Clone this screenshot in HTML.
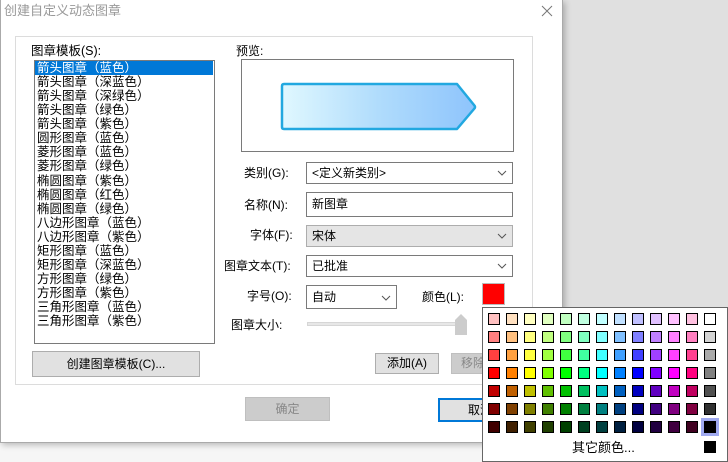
<!DOCTYPE html>
<html><head><meta charset="utf-8"><style>
*{margin:0;padding:0;box-sizing:border-box}
body{width:728px;height:462px;position:relative;overflow:hidden;background:#f6f6f6;font-family:"Liberation Sans","Noto Sans CJK SC",sans-serif;font-size:12px;color:#000}
.a{position:absolute}
.lbl{position:absolute;font-size:12px;line-height:14px;white-space:nowrap}
.box{position:absolute;border:1px solid #7a7a7a;background:#fff}
.cb{position:absolute;border:1px solid #7a7a7a;background:#fff;font-size:12px;line-height:20px;padding-left:5px}
.cb svg{position:absolute;right:5px;top:7px}
.btn{position:absolute;border:1px solid #adadad;background:#e1e1e1;text-align:center;font-size:12px}
.sw{position:absolute;width:12px;height:12px;border:1px solid #000}
</style></head><body>
<div class="a" style="left:562px;top:0;width:166px;height:443px;background:#e0e0e0"></div>
<div class="a" style="left:0;top:0;width:563px;height:443px;background:#fff;border:1px solid #aaa;border-top:none;box-shadow:2px 2px 6px rgba(0,0,0,.25)"></div>
<div class="lbl" style="left:4px;top:3px;font-size:13px;line-height:16px;color:#999">创建自定义动态图章</div>
<svg class="a" style="left:541px;top:5px" width="12" height="12"><path d="M1 1L11 11M11 1L1 11" stroke="#777" stroke-width="1"/></svg>
<div class="a" style="left:15px;top:36px;width:518px;height:349px;border:1px solid #dcdcdc"></div>
<div class="lbl" style="left:31px;top:44px;font-size:12.5px">图章模板(S):</div>
<div class="box" style="left:34px;top:60px;width:181px;height:284px"></div>
<div class="a" style="left:35px;top:61px;width:178px;height:14px;background:#0078d7"></div>
<div class="a" style="left:37px;top:61px;line-height:14.06px;font-size:12.5px;white-space:nowrap">
<div style="color:#fff">箭头图章（蓝色）</div><div>箭头图章（深蓝色）</div><div>箭头图章（深绿色）</div><div>箭头图章（绿色）</div><div>箭头图章（紫色）</div><div>圆形图章（蓝色）</div><div>菱形图章（蓝色）</div><div>菱形图章（绿色）</div><div>椭圆图章（紫色）</div><div>椭圆图章（红色）</div><div>椭圆图章（绿色）</div><div>八边形图章（蓝色）</div><div>八边形图章（紫色）</div><div>矩形图章（蓝色）</div><div>矩形图章（深蓝色）</div><div>方形图章（绿色）</div><div>方形图章（紫色）</div><div>三角形图章（蓝色）</div><div>三角形图章（紫色）</div></div>
<div class="btn" style="left:32px;top:351px;width:168px;height:26px;line-height:24px">创建图章模板(C)...</div>
<div class="lbl" style="left:236px;top:44px">预览:</div>
<div class="box" style="left:241px;top:59px;width:273px;height:93px"></div>
<svg class="a" style="left:279px;top:81px" width="200" height="52"><defs><linearGradient id="g" x1="0" x2="1"><stop offset="0" stop-color="#e0f8ff"/><stop offset=".5" stop-color="#b0dcfc"/><stop offset="1" stop-color="#8ec4fc"/></linearGradient></defs><path d="M5 3H178L195 24Q197 26 195 28L178 48H5Q3 48 3 46V5Q3 3 5 3Z" fill="url(#g)" stroke="#22a8e0" stroke-width="2.5" stroke-linejoin="round"/></svg>
<div class="lbl" style="left:244px;top:166px">类别(G):</div>
<div class="cb" style="left:306px;top:162px;width:207px;height:22px">&lt;定义新类别&gt;<svg width="10" height="6"><path d="M1 1L5 5L9 1" stroke="#555" fill="none"/></svg></div>
<div class="lbl" style="left:244px;top:198px">名称(N):</div>
<div class="cb" style="left:306px;top:192px;width:207px;height:25px;line-height:23px">新图章</div>
<div class="lbl" style="left:250px;top:228px">字体(F):</div>
<div class="cb" style="left:306px;top:225px;width:207px;height:22px;background:#e5e5e5;border-color:#adadad">宋体<svg width="10" height="6"><path d="M1 1L5 5L9 1" stroke="#555" fill="none"/></svg></div>
<div class="lbl" style="left:224px;top:259px">图章文本(T):</div>
<div class="cb" style="left:306px;top:255px;width:207px;height:22px">已批准<svg width="10" height="6"><path d="M1 1L5 5L9 1" stroke="#555" fill="none"/></svg></div>
<div class="lbl" style="left:247px;top:289px">字号(O):</div>
<div class="cb" style="left:306px;top:285px;width:91px;height:24px;line-height:22px">自动<svg width="10" height="6" style="top:9px"><path d="M1 1L5 5L9 1" stroke="#555" fill="none"/></svg></div>
<div class="lbl" style="left:422px;top:290px">颜色(L):</div>
<div class="a" style="left:482px;top:283px;width:23px;height:22px;background:#ff0000;border:1px solid #bbb;box-shadow:inset 0 0 0 1px #fff"></div>
<div class="a" style="left:483px;top:284px;width:21px;height:20px;background:#f00"></div>
<div class="lbl" style="left:231px;top:318px">图章大小:</div>
<div class="a" style="left:307px;top:322px;width:158px;height:4px;background:#e7e7e7;border:1px solid #d6d6d6"></div>
<svg class="a" style="left:455px;top:314px" width="12" height="21"><path d="M0 6L6 0L12 6V21H0Z" fill="#cccccc"/></svg>
<div class="btn" style="left:375px;top:353px;width:64px;height:21px;line-height:19px">添加(A)</div>
<div class="btn" style="left:451px;top:353px;width:64px;height:21px;line-height:19px;color:#888;background:#ccc;border-color:#bfbfbf;text-align:left;padding-left:9px">移除</div>
<div class="a" style="left:15px;top:384px;width:518px;border-top:1px solid #dcdcdc"></div>
<div class="btn" style="left:245px;top:397px;width:85px;height:24px;line-height:22px;color:#888;background:#ccc;border-color:#bfbfbf">确定</div>
<div class="btn" style="left:438px;top:398px;width:80px;height:24px;line-height:20px;border:2px solid #0078d7;text-align:left;padding-left:28px">取消</div>
<div class="a" style="left:482px;top:307px;width:246px;height:155px;background:#fff;border:1px solid #666"></div>
<div class="a" style="left:701px;top:418px;width:18px;height:18px;background:#a0aaf0"></div>
<div class="lbl" style="left:572px;top:440px;font-size:13px;line-height:16px">其它颜色...</div>
<div class="a" style="left:704px;top:441px;width:12px;height:12px;background:#000"></div>
<div style="position:absolute;left:0;top:0">
<div class="sw" style="left:488px;top:313px;background:#ffc0c0"></div><div class="sw" style="left:506px;top:313px;background:#ffe0c0"></div><div class="sw" style="left:524px;top:313px;background:#ffffc0"></div><div class="sw" style="left:542px;top:313px;background:#e0ffc0"></div><div class="sw" style="left:560px;top:313px;background:#c0ffc0"></div><div class="sw" style="left:578px;top:313px;background:#c0ffe0"></div><div class="sw" style="left:596px;top:313px;background:#c0ffff"></div><div class="sw" style="left:614px;top:313px;background:#c0e0ff"></div><div class="sw" style="left:632px;top:313px;background:#c0c0ff"></div><div class="sw" style="left:650px;top:313px;background:#e0c0ff"></div><div class="sw" style="left:668px;top:313px;background:#ffc0ff"></div><div class="sw" style="left:686px;top:313px;background:#ffc0e0"></div><div class="sw" style="left:704px;top:313px;background:#ffffff"></div>
<div class="sw" style="left:488px;top:331px;background:#ff8080"></div><div class="sw" style="left:506px;top:331px;background:#ffc080"></div><div class="sw" style="left:524px;top:331px;background:#ffff80"></div><div class="sw" style="left:542px;top:331px;background:#c0ff80"></div><div class="sw" style="left:560px;top:331px;background:#80ff80"></div><div class="sw" style="left:578px;top:331px;background:#80ffc0"></div><div class="sw" style="left:596px;top:331px;background:#80ffff"></div><div class="sw" style="left:614px;top:331px;background:#80c0ff"></div><div class="sw" style="left:632px;top:331px;background:#8080ff"></div><div class="sw" style="left:650px;top:331px;background:#c080ff"></div><div class="sw" style="left:668px;top:331px;background:#ff80ff"></div><div class="sw" style="left:686px;top:331px;background:#ff80c0"></div><div class="sw" style="left:704px;top:331px;background:#d4d4d4"></div>
<div class="sw" style="left:488px;top:349px;background:#ff4040"></div><div class="sw" style="left:506px;top:349px;background:#ffa040"></div><div class="sw" style="left:524px;top:349px;background:#ffff40"></div><div class="sw" style="left:542px;top:349px;background:#a0ff40"></div><div class="sw" style="left:560px;top:349px;background:#40ff40"></div><div class="sw" style="left:578px;top:349px;background:#40ffa0"></div><div class="sw" style="left:596px;top:349px;background:#40ffff"></div><div class="sw" style="left:614px;top:349px;background:#40a0ff"></div><div class="sw" style="left:632px;top:349px;background:#4040ff"></div><div class="sw" style="left:650px;top:349px;background:#a040ff"></div><div class="sw" style="left:668px;top:349px;background:#ff40ff"></div><div class="sw" style="left:686px;top:349px;background:#ff4090"></div><div class="sw" style="left:704px;top:349px;background:#aaaaaa"></div>
<div class="sw" style="left:488px;top:367px;background:#ff0000"></div><div class="sw" style="left:506px;top:367px;background:#ff8000"></div><div class="sw" style="left:524px;top:367px;background:#ffff00"></div><div class="sw" style="left:542px;top:367px;background:#80ff00"></div><div class="sw" style="left:560px;top:367px;background:#00ff00"></div><div class="sw" style="left:578px;top:367px;background:#00ff80"></div><div class="sw" style="left:596px;top:367px;background:#00ffff"></div><div class="sw" style="left:614px;top:367px;background:#0080ff"></div><div class="sw" style="left:632px;top:367px;background:#0000ff"></div><div class="sw" style="left:650px;top:367px;background:#8000ff"></div><div class="sw" style="left:668px;top:367px;background:#ff00ff"></div><div class="sw" style="left:686px;top:367px;background:#ff0080"></div><div class="sw" style="left:704px;top:367px;background:#808080"></div>
<div class="sw" style="left:488px;top:385px;background:#c00000"></div><div class="sw" style="left:506px;top:385px;background:#c06000"></div><div class="sw" style="left:524px;top:385px;background:#c0c000"></div><div class="sw" style="left:542px;top:385px;background:#60c000"></div><div class="sw" style="left:560px;top:385px;background:#00c000"></div><div class="sw" style="left:578px;top:385px;background:#00c060"></div><div class="sw" style="left:596px;top:385px;background:#00c0c0"></div><div class="sw" style="left:614px;top:385px;background:#0060c0"></div><div class="sw" style="left:632px;top:385px;background:#0000c0"></div><div class="sw" style="left:650px;top:385px;background:#6000c0"></div><div class="sw" style="left:668px;top:385px;background:#c000c0"></div><div class="sw" style="left:686px;top:385px;background:#c00060"></div><div class="sw" style="left:704px;top:385px;background:#505050"></div>
<div class="sw" style="left:488px;top:403px;background:#800000"></div><div class="sw" style="left:506px;top:403px;background:#804000"></div><div class="sw" style="left:524px;top:403px;background:#808000"></div><div class="sw" style="left:542px;top:403px;background:#408000"></div><div class="sw" style="left:560px;top:403px;background:#008000"></div><div class="sw" style="left:578px;top:403px;background:#008040"></div><div class="sw" style="left:596px;top:403px;background:#008080"></div><div class="sw" style="left:614px;top:403px;background:#004080"></div><div class="sw" style="left:632px;top:403px;background:#000080"></div><div class="sw" style="left:650px;top:403px;background:#400080"></div><div class="sw" style="left:668px;top:403px;background:#800080"></div><div class="sw" style="left:686px;top:403px;background:#800040"></div><div class="sw" style="left:704px;top:403px;background:#303030"></div>
<div class="sw" style="left:488px;top:421px;background:#400000"></div><div class="sw" style="left:506px;top:421px;background:#402000"></div><div class="sw" style="left:524px;top:421px;background:#404000"></div><div class="sw" style="left:542px;top:421px;background:#204000"></div><div class="sw" style="left:560px;top:421px;background:#004000"></div><div class="sw" style="left:578px;top:421px;background:#004020"></div><div class="sw" style="left:596px;top:421px;background:#004040"></div><div class="sw" style="left:614px;top:421px;background:#002040"></div><div class="sw" style="left:632px;top:421px;background:#000040"></div><div class="sw" style="left:650px;top:421px;background:#200040"></div><div class="sw" style="left:668px;top:421px;background:#400040"></div><div class="sw" style="left:686px;top:421px;background:#400020"></div><div class="sw" style="left:704px;top:421px;background:#000000"></div>
</div>
</body></html>
